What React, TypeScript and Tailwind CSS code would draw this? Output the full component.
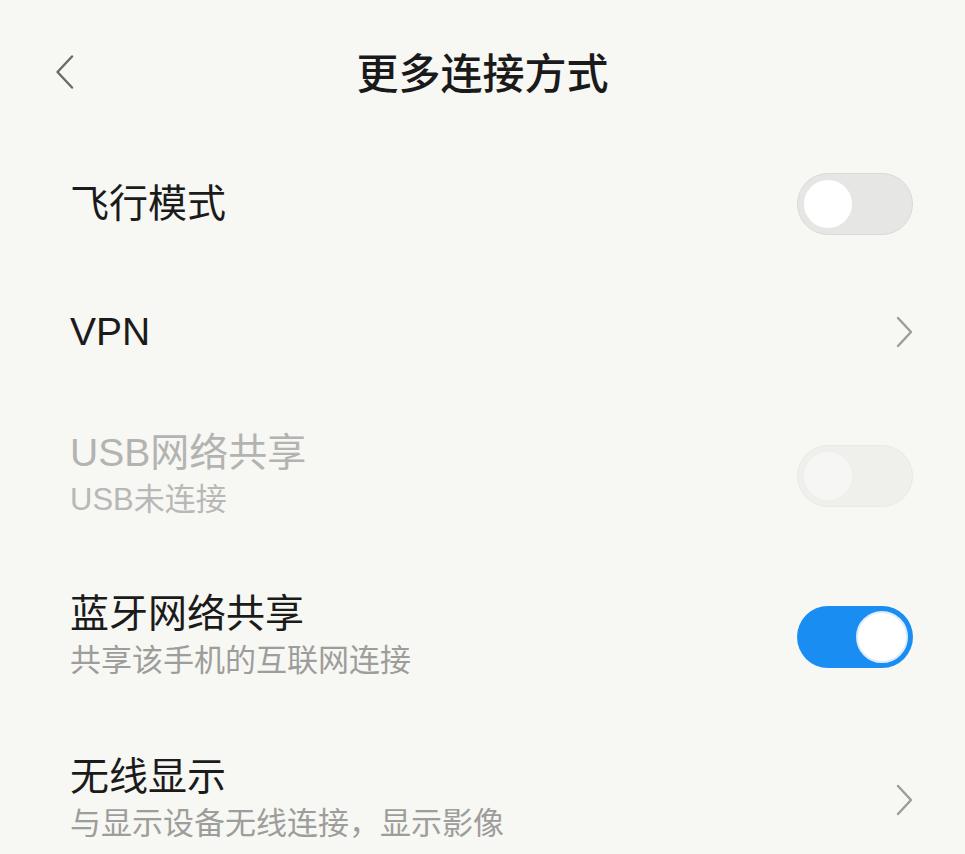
import React from "react";

const font = { fontFamily: '"Liberation Sans", "Noto Sans CJK SC", "Noto Sans", sans-serif' };

function Toggle({ state }: { state: "off" | "on" | "disabled" }) {
  if (state === "on") {
    return (
      <div className="flex h-[62px] w-[116px] items-center justify-end rounded-full bg-[#1a8df2] pr-[5px]">
        <div className="h-[52px] w-[52px] rounded-full border-[2px] border-[#dcebfb] bg-white" />
      </div>
    );
  }
  if (state === "disabled") {
    return (
      <div className="flex h-[62px] w-[116px] items-center justify-start rounded-full border border-[#e9e9e6] bg-[#efefec] pl-[6px]">
        <div className="h-[48px] w-[48px] rounded-full bg-[#f6f6f4]" />
      </div>
    );
  }
  return (
    <div className="flex h-[62px] w-[116px] items-center justify-start rounded-full border border-[#dadad8] bg-[#e6e6e4] pl-[6px]">
      <div className="h-[48px] w-[48px] rounded-full bg-white" />
    </div>
  );
}

function Chevron() {
  return (
    <svg width="18" height="32" viewBox="0 0 18 32" className="mr-[-1px]">
      <path d="M2 2 L15 16 L2 30" fill="none" stroke="#9c9c9a" strokeWidth="2.4" strokeLinecap="round" strokeLinejoin="round" />
    </svg>
  );
}

function Row({
  title,
  subtitle,
  right,
  height,
  disabled,
}: {
  title: string;
  subtitle?: string;
  right: React.ReactNode;
  height: string;
  disabled?: boolean;
}) {
  return (
    <div className={`flex items-center justify-between pl-[70px] pr-[52px] ${height}`}>
      <div className="flex flex-col">
        <div className={`text-[39px] leading-[46px] ${disabled ? "text-[#b3b3b1]" : "text-[#1b1b1b]"}`}>{title}</div>
        {subtitle && (
          <div className={`text-[31px] leading-[47px] ${disabled ? "text-[#b8b8b6]" : "text-[#9d9d9b]"}`}>{subtitle}</div>
        )}
      </div>
      <div className="flex items-center">{right}</div>
    </div>
  );
}

export default function App() {
  return (
    <div className="h-[854px] w-full overflow-hidden bg-[#f7f7f3]" style={font}>
      <div className="relative flex h-[140px] items-start justify-center pt-[50px]">
        <div className="absolute left-[55px] top-[55px]">
          <svg width="20" height="34" viewBox="0 0 20 34">
            <path d="M17 1.5 L2.5 17 L17 32.5" fill="none" stroke="#6a6a6a" strokeWidth="2.4" strokeLinecap="round" strokeLinejoin="round" />
          </svg>
        </div>
        <div className="text-[42px] font-medium leading-[50px] text-[#1a1a1a]">更多连接方式</div>
      </div>
      <Row title="飞行模式" height="h-[128px]" right={<Toggle state="off" />} />
      <Row title="VPN" height="h-[128px]" right={<Chevron />} />
      <Row title="USB网络共享" subtitle="USB未连接" height="h-[160px]" disabled right={<Toggle state="disabled" />} />
      <Row title="蓝牙网络共享" subtitle="共享该手机的互联网连接" height="h-[162px]" right={<Toggle state="on" />} />
      <Row title="无线显示" subtitle="与显示设备无线连接，显示影像" height="h-[164px]" right={<Chevron />} />
    </div>
  );
}
